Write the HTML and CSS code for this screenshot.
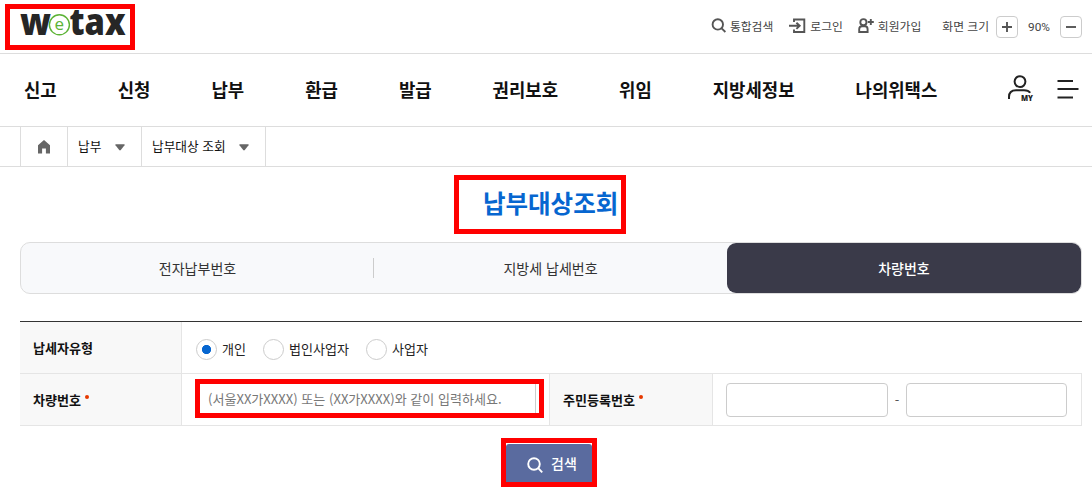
FILE: index.html
```html
<!DOCTYPE html>
<html lang="ko">
<head>
<meta charset="utf-8">
<title>wetax - 납부대상조회</title>
<link rel="stylesheet" href="styles.css">
</head>
<body>
<header class="top">
  <a class="logo mark" aria-label="wetax">
    <svg width="120" height="36" viewBox="0 0 120 36">
      <g class="logo-word"><text x="10" y="26" textLength="31" lengthAdjust="spacingAndGlyphs">w</text><text x="59.5" y="26" textLength="56" lengthAdjust="spacingAndGlyphs">tax</text></g>
      <circle class="logo-ring" cx="49.4" cy="15.8" r="10"/>
      <text class="logo-e" x="44.6" y="20.5">e</text>
    </svg>
  </a>
  <div class="util">
    <a class="u-search"><svg width="16" height="16" viewBox="0 0 16 16"><circle cx="6.8" cy="6.4" r="5.2"/><path d="M10.6 10.4 14.4 14"/></svg><span>통합검색</span></a>
    <a class="u-login"><svg width="18" height="16" viewBox="0 0 18 16"><path d="M5 4V1.5H15.3V14H5V11.4M0 7.8H10.5M7.4 4.7 10.7 7.8 7.4 10.9"/></svg><span>로그인</span></a>
    <a class="u-join"><svg width="17" height="16" viewBox="0 0 17 16"><circle cx="5.4" cy="4.2" r="3.1"/><path d="M1.2 14V11.2Q1.2 8.2 4 8.2H7Q9.6 8.2 9.6 11.2V14ZM12.8 1V7M9.8 4H15.8"/></svg><span>회원가입</span></a>
    <span class="u-size">화면 크기</span>
    <button class="zoom"><svg width="12" height="12" viewBox="0 0 12 12"><path d="M1 6H11M6 1V11"/></svg></button>
    <span class="pct">90%</span>
    <button class="zoom"><svg width="12" height="12" viewBox="0 0 12 12"><path d="M1 6H11"/></svg></button>
  </div>
</header>
<nav class="gnb">
  <a>신고</a><a>신청</a><a>납부</a><a>환급</a><a>발급</a><a>권리보호</a><a>위임</a><a>지방세정보</a><a>나의위택스</a>
  <div class="gnb-icons">
    <svg width="28" height="30" viewBox="0 0 28 30"><circle cx="13" cy="7.6" r="5.4"/><path d="M2 25V23Q2 16.3 9 16.3H17Q21.5 16.3 23.2 18.8"/><text x="14" y="27" textLength="12" lengthAdjust="spacingAndGlyphs">MY</text></svg>
    <svg width="22" height="20" viewBox="0 0 22 20"><path d="M.5 2H16M.5 10H21.5M.5 18.5H16"/></svg>
  </div>
</nav>
<div class="crumbs">
  <a class="home"><svg width="12" height="14" viewBox="0 0 12 14"><path d="M6 0 12 5.2V13.5H7.9V8.5H4.1V13.5H0V5.2Z"/></svg></a>
  <a class="c1"><span>납부</span><svg width="10" height="7" viewBox="0 0 10 7"><path d="M.8.2H9.2Q10 .2 9.5 1.2L5.8 6Q5 6.8 4.2 6L.5 1.2Q0 .2.8.2Z"/></svg></a>
  <a class="c2"><span>납부대상 조회</span><svg width="10" height="7" viewBox="0 0 10 7"><path d="M.8.2H9.2Q10 .2 9.5 1.2L5.8 6Q5 6.8 4.2 6L.5 1.2Q0 .2.8.2Z"/></svg></a>
</div>
<main>
  <h1 class="mark">납부대상조회</h1>
  <div class="tabs"><a>전자납부번호</a><a>지방세 납세번호</a><a class="on">차량번호</a></div>
  <form class="grid">
    <div class="th">납세자유형</div>
    <div class="td wide">
      <label><input type="radio" name="type" checked>개인</label>
      <label><input type="radio" name="type">법인사업자</label>
      <label><input type="radio" name="type">사업자</label>
    </div>
    <div class="th">차량번호<i></i></div>
    <div class="td"><div class="field mark"><input type="text" class="car" placeholder="(서울XX가XXXX) 또는 (XX가XXXX)와 같이 입력하세요."></div></div>
    <div class="th">주민등록번호<i></i></div>
    <div class="td ids"><input type="text"><span>-</span><input type="text"></div>
  </form>
  <div class="mark submit"><button class="search"><svg width="17" height="17" viewBox="0 0 17 17"><circle cx="7" cy="7" r="5.8"/><path d="M11.2 11.2 15.2 15.4"/></svg><span>검색</span></button></div>
</main>
</body>
</html>
```
FILE: styles.css
```css
* { box-sizing: border-box; }
body {
  margin: 0;
  height: 490px;
  overflow: hidden;
  background: #fff;
  color: #111;
  font-family: "Noto Sans CJK KR", sans-serif;
}
svg { display: block; flex: none; fill: none; }
button, input { margin: 0; font-family: inherit; }
.mark { border: 5px solid #f00; }

.top {
  display: flex;
  justify-content: space-between;
  height: 54px;
  border-bottom: 1px solid #ddd;
  padding: 4px 10px 0 5px;
}
.logo { width: 130px; height: 46px; }
.logo-word { font: 800 37px "Open Sans", sans-serif; fill: #262626; }
.logo-ring { stroke: #5cb335; stroke-width: 1.4; fill: #fff; }
.logo-e { font: 17px "Open Sans", sans-serif; fill: #5cb335; }
.util {
  display: flex;
  align-items: center;
  height: 44px;
  font-size: 11.8px;
  line-height: 18px;
  color: #444;
}
.util a { display: flex; align-items: center; gap: 3px; }
.util svg { stroke: #555; stroke-width: 1.9; }
.u-login { margin-left: 16px; }
.u-join { margin-left: 15px; }
.u-size { margin-left: 21px; }
.zoom {
  display: grid;
  place-items: center;
  width: 22px;
  height: 22px;
  margin-top: 2px;
  padding: 0;
  border: 1px solid #ccc;
  border-radius: 4px;
  background: #fff;
}
.u-size + .zoom { margin-left: 7px; }
.pct { width: 42px; text-align: center; font-family: Roboto, sans-serif; padding-top: 1px; }

.gnb {
  display: flex;
  align-items: center;
  gap: 61px;
  height: 73px;
  padding: 0 13px 3px 24px;
  border-bottom: 1px solid #ddd;
  font-size: 17.8px;
  font-weight: 700;
  line-height: 26px;
}
.gnb-icons { display: flex; align-items: center; gap: 22px; margin-left: auto; }
.gnb-icons svg { stroke: #222; stroke-width: 2; }
.gnb-icons text { font: 800 8px "Open Sans", sans-serif; fill: #222; stroke: none; }

.crumbs {
  display: flex;
  height: 40px;
  padding-left: 20px;
  border-bottom: 1px solid #ddd;
  font-size: 12.7px;
  line-height: 18px;
}
.crumbs a { display: flex; align-items: center; border-right: 1px solid #ddd; }
.crumbs span { margin-top: -2px; }
.crumbs svg { fill: #666; }
.crumbs .home { width: 48px; border-left: 1px solid #ddd; justify-content: center; }
.c1, .c2 { padding: 0 16px 0 10px; justify-content: space-between; }
.c1 { width: 74px; }
.c2 { width: 124px; }
.c1 svg, .c2 svg { margin-top: 2px; }

main { padding: 8px 10px 0 20px; }
h1 {
  width: 172px;
  height: 59px;
  margin: 0 0 8px 434px;
  padding: 0 3px 0 24px;
  white-space: nowrap;
  font-size: 24.5px;
  line-height: 45px;
  font-weight: 700;
  color: #0666d0;
}
.tabs {
  display: grid;
  grid-template-columns: 353px 353px 1fr;
  height: 52px;
  border: 1px solid #ddd;
  border-radius: 10px;
  background: #f8f9fb;
  font-size: 14px;
  line-height: 20px;
  color: #333;
}
.tabs a { display: grid; place-items: center; border-radius: 9px; }
.tabs a:first-child {
  background: linear-gradient(#ccc, #ccc) right center / 1px 20px no-repeat;
}
.tabs .on { background: #3a3a49; color: #fff; font-weight: 500; }

.grid {
  display: grid;
  grid-template-columns: 161px 369px 162px 370px;
  grid-template-rows: 52px 52px;
  margin-top: 27px;
  border-top: 1px solid #333;
  font-size: 13.05px;
  line-height: 20px;
}
.th {
  display: flex;
  align-items: center;
  padding-left: 13px;
  background: #f8f8f8;
  border-bottom: 1px solid #e5e5e5;
  font-weight: 700;
}
.th i { width: 4px; height: 4px; margin: -6px 0 0 4px; border-radius: 50%; background: #e63900; }
.td {
  display: flex;
  align-items: center;
  padding-left: 13px;
  border: solid #e5e5e5;
  border-width: 0 1px 1px;
}
.wide { grid-column: 2 / -1; gap: 17px; padding: 3px 0 0 14px; border-right: 0; }
.wide label { display: flex; align-items: center; gap: 5px; color: #222; }
.wide input {
  appearance: none;
  width: 21px;
  height: 21px;
  border: 1px solid #ccc;
  border-radius: 50%;
}
.wide input:checked { background: radial-gradient(circle, #0666d0 4.3px, #fff 4.9px); }
.field { width: 349px; height: 39px; margin-top: -2px; }
.car {
  width: 336px;
  height: 29px;
  border: 0;
  border-right: 1px solid #ccc;
  padding: 0 0 0 8px;
  font-size: 13.05px;
  outline: 0;
}
.car::placeholder { color: #777; }
.ids input { width: 162px; height: 34px; border: 1px solid #ccc; border-radius: 4px; }
.ids input:last-child { width: 161px; }
.ids span { width: 18px; text-align: center; color: #555; }
.submit { width: 96px; height: 49px; margin: 12px 0 0 481px; padding-top: 1px; }
.search {
  display: flex;
  align-items: center;
  gap: 7px;
  width: 86px;
  height: 38px;
  padding: 0 0 0 21px;
  border: 0;
  border-radius: 3px 3px 0 0;
  background: #5a6b9f;
  color: #fff;
  font-size: 14px;
  line-height: 20px;
  font-weight: 500;
}
.search svg { stroke: #fff; stroke-width: 1.9; margin-top: 4px; }
```
